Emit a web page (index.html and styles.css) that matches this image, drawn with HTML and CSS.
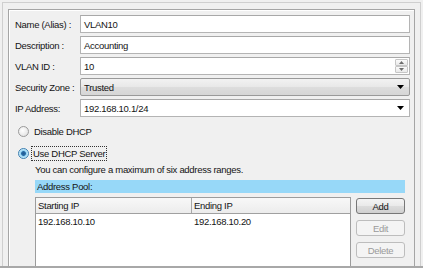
FILE: index.html
```html
<!DOCTYPE html>
<html>
<head>
<meta charset="utf-8">
<link rel="stylesheet" href="styles.css">
</head>
<body>
<div class="frame">
  <div class="panel">
    <div class="form">
      <div class="row"><span class="lbl">Name (Alias) :</span><div class="field">VLAN10</div></div>
      <div class="row"><span class="lbl">Description :</span><div class="field">Accounting</div></div>
      <div class="row"><span class="lbl">VLAN ID :</span><div class="field"><span class="val">10</span>
        <span class="spin">
          <span class="spin-btn"><svg width="5" height="3" viewBox="0 0 5 3"><path d="M0 3 L2.5 0 L5 3 Z" fill="#6d6d6d"/></svg></span>
          <span class="spin-btn"><svg width="5" height="3" viewBox="0 0 5 3"><path d="M0 0 L2.5 3 L5 0 Z" fill="#6d6d6d"/></svg></span>
        </span></div></div>
      <div class="row"><span class="lbl">Security Zone :</span><div class="field combo"><span class="val">Trusted</span>
        <svg class="arrow" width="7" height="4" viewBox="0 0 7 4"><path d="M0 0 H7 L3.5 4 Z" fill="#000"/></svg></div></div>
      <div class="row"><span class="lbl">IP Address:</span><div class="field"><span class="val">192.168.10.1/24</span>
        <svg class="arrow" width="7" height="4" viewBox="0 0 7 4"><path d="M0 0 H7 L3.5 4 Z" fill="#000"/></svg></div></div>
    </div>

    <div class="radio-row first"><span class="radio"></span><span class="rtext">Disable DHCP</span></div>
    <div class="radio-row"><span class="radio checked"></span><span class="rtext focus">Use DHCP Server</span></div>

    <div class="dhcp">
      <p class="info">You can configure a maximum of six address ranges.</p>
      <div class="pool-bar">Address Pool:</div>
      <div class="pool">
        <div class="table">
          <div class="thead">
            <div class="th c1">Starting IP</div>
            <div class="th c2">Ending IP</div>
          </div>
          <div class="tr">
            <div class="td c1">192.168.10.10</div>
            <div class="td c2">192.168.10.20</div>
          </div>
        </div>
        <div class="buttons">
          <button class="btn">Add</button>
          <button class="btn disabled">Edit</button>
          <button class="btn disabled">Delete</button>
        </div>
      </div>
    </div>
  </div>
</div>
</body>
</html>
```
FILE: styles.css
```css
html, body {
  margin: 0;
  padding: 0;
}
body {
  height: 266px;
  width: 423px;
  overflow: hidden;
  background: #f0f0f0;
  border-bottom: 2px solid #a8a8a8;
  font-family: "Liberation Sans", Arial, sans-serif;
  font-size: 9.5px;
  letter-spacing: -0.3px;
  color: #141414;
}
.frame {
  margin: 2px 0 0 2px;
  width: 419px;
  height: 264px;
  border: 1px solid #cfcfcf;
  border-bottom: none;
  padding: 6px 5px 0 5px;
  box-sizing: border-box;
}
.panel {
  border: 1px solid #a5a5a5;
  border-bottom: none;
  box-shadow: inset 1px 1px 0 #ffffff;
  height: 258px;
  padding: 5px 4px 0 6px;
  box-sizing: border-box;
}
.form {
  display: flex;
  flex-direction: column;
  gap: 3px;
}
.row {
  display: flex;
  align-items: center;
  height: 18px;
}
.lbl {
  width: 65px;
  flex: none;
}
.field {
  flex: 1;
  height: 18px;
  box-sizing: border-box;
  border: 1px solid #b4b4b4;
  border-top-color: #a8a8a8;
  background: #fff;
  padding-left: 3px;
  display: flex;
  align-items: center;
}
.val { flex: 1; }
.combo {
  background: linear-gradient(#f2f2f2, #e8e8e8 50%, #dddddd 51%, #d6d6d6);
  border-color: #9a9a9a;
  border-radius: 2px;
}
.arrow {
  margin-right: 5px;
  flex: none;
}
.spin {
  display: flex;
  flex-direction: column;
  margin-right: 1px;
}
.spin-btn {
  width: 13px;
  height: 7px;
  border: 1px solid #c6c6c6;
  border-radius: 1px;
  background: linear-gradient(#fbfbfb, #e9e9e9);
  display: flex;
  align-items: center;
  justify-content: center;
  box-sizing: border-box;
}
.radio-row {
  display: flex;
  align-items: center;
  height: 14px;
  margin-top: 8px;
  padding-left: 3px;
}
.radio-row.first { margin-top: 7px; }
.radio {
  width: 11px;
  height: 11px;
  box-sizing: border-box;
  border-radius: 50%;
  border: 1px solid #9a9a9a;
  background: radial-gradient(circle at 40% 40%, #ffffff, #dcdcdc);
  margin-right: 3px;
  flex: none;
}
.radio.checked {
  border-color: #3c7fb1;
  background: radial-gradient(circle, #1f5a93 0, #2a6ca6 2px, #8fd0f2 2.8px, #cdeefb 4.5px);
}
.rtext {
  padding: 1px 1px;
  border: 1px solid transparent;
  line-height: 11px;
}
.rtext.focus {
  border: 1px dotted #333;
  margin-left: -1px;
}
.dhcp {
  margin-left: 20px;
  margin-right: 5px;
}
.info {
  margin: 4px 0 0 0;
  height: 12px;
  line-height: 12px;
}
.pool-bar {
  margin-top: 4px;
  height: 13px;
  line-height: 13px;
  background: #97d8f8;
  padding-left: 2px;
}
.pool {
  display: flex;
  gap: 5px;
  margin-top: 4px;
}
.table {
  flex: 1;
  height: 69px;
  box-sizing: border-box;
  border: 1px solid #9c9c9c;
  border-bottom: none;
  background: #fff;
}
.thead {
  display: flex;
  height: 16px;
  box-sizing: border-box;
  background: linear-gradient(#f8f8f8, #ececec);
  border-bottom: 1px solid #a0a0a0;
}
.th {
  line-height: 15px;
  padding-left: 2px;
  box-sizing: border-box;
}
.th.c1 {
  width: 156px;
  border-right: 1px solid #a8a8a8;
}
.tr {
  display: flex;
  height: 15px;
}
.td {
  line-height: 15px;
  padding-left: 2px;
  box-sizing: border-box;
}
.td.c1 { width: 156px; }
.buttons {
  width: 49px;
  display: flex;
  flex-direction: column;
  gap: 6px;
  padding-top: 1px;
}
.btn {
  height: 16px;
  padding: 0;
  margin: 0;
  font: inherit;
  letter-spacing: inherit;
  color: #141414;
  border: 1px solid #777;
  border-radius: 3px;
  background: linear-gradient(#f4f4f4, #e9e9e9 50%, #dcdcdc 51%, #d0d0d0);
}
.btn.disabled {
  color: #9a9a9a;
  border-color: #bdbdbd;
  background: #f4f4f4;
}
```
